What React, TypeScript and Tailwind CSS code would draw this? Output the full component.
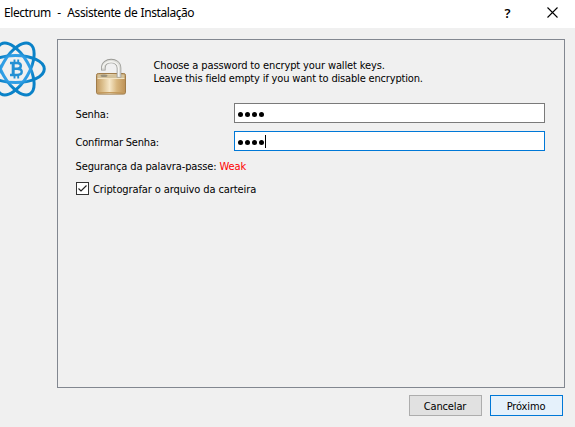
import type { ReactNode } from "react";

function AtomLogo() {
  return (
    <svg width="47" height="60" viewBox="0 0 47 60" className="block">
      <defs>
        <radialGradient id="orbit" gradientUnits="userSpaceOnUse" cx="15.5" cy="30" r="30">
          <stop offset="0" stopColor="#3eaaf0" />
          <stop offset="0.48" stopColor="#2f9de4" />
          <stop offset="0.62" stopColor="#0a82c8" />
          <stop offset="1" stopColor="#0a82c8" />
        </radialGradient>
      </defs>
      <g fill="none" stroke="url(#orbit)" strokeWidth="3">
        <ellipse cx="15.5" cy="30" rx="28.8" ry="13.6" />
        <ellipse cx="15.5" cy="30" rx="28.8" ry="13.6" transform="rotate(60 15.5 30)" />
        <ellipse cx="15.5" cy="30" rx="28.8" ry="13.6" transform="rotate(-60 15.5 30)" />
      </g>
      <g fill="none" stroke="#2490d4">
        <path
          d="M10 24H17.3C22 24 22 29.7 17.3 29.7H13.6M17.3 29.7C23.2 29.7 23.2 36 17.3 36H10"
          strokeWidth="2.4"
        />
        <path d="M13.2 24V36" strokeWidth="3" />
        <path d="M14.5 20.6V23.5M18.2 20.6V23.5M14.5 36.5V39.4M18.2 36.5V39.4" strokeWidth="1.9" />
      </g>
    </svg>
  );
}

function OpenPadlock() {
  return (
    <svg width="32" height="38" viewBox="0 0 32 38" className="block">
      <defs>
        <linearGradient id="brass" x1="0" y1="0" x2="1" y2="0">
          <stop offset="0" stopColor="#c39a60" />
          <stop offset="0.22" stopColor="#dcc08e" />
          <stop offset="0.45" stopColor="#f6e7c8" />
          <stop offset="0.7" stopColor="#d8b67e" />
          <stop offset="1" stopColor="#bd9156" />
        </linearGradient>
      </defs>
      <rect x="1.5" y="15.5" width="29" height="20.6" rx="1.8" fill="url(#brass)" stroke="#a07c4a" />
      <path d="M2.5 16.5H29.5V20H2.5Z" fill="#d3c19a" />
      <path d="M2.5 20.5H29.5" stroke="#f3e4c5" />
      <path d="M2.5 34.5H29.5" stroke="#c59b5d" />
      <ellipse cx="9" cy="17.8" rx="3.5" ry="1.2" fill="#9a917a" />
      <path d="M8.3 12.5V10C8.3 .9 24 .6 24 10V19.5" fill="none" stroke="#9a9a96" strokeWidth="4.6" />
      <path d="M8.3 11.8V10C8.3 1 24 .7 24 10V19" fill="none" stroke="#dededa" strokeWidth="3" />
      <path d="M7.8 10C8.6 1.7 23.3 1.4 23.5 10V18.5" fill="none" stroke="#f5f5f2" strokeWidth="1.2" />
    </svg>
  );
}

function PasswordField({ focused = false }: { focused?: boolean }) {
  return (
    <div
      className={`flex h-5 w-[311px] items-center border bg-white pl-[3px] ${
        focused ? "border-[#0078d7]" : "border-[#7a7a7a]"
      }`}
    >
      <div className="flex gap-[2px] pt-[3px]">
        {[0, 1, 2, 3].map((i) => (
          <span key={i} className="h-[5px] w-[5px] rounded-full bg-black" />
        ))}
      </div>
      {focused && <span className="ml-px h-[13px] w-px bg-black" />}
    </div>
  );
}

function DialogButton({ children, primary = false }: { children: ReactNode; primary?: boolean }) {
  return (
    <button
      className={`flex h-[21px] w-[73px] items-center justify-center border pt-px pr-px ${
        primary ? "border-[#0078d7] bg-[#e5f1fb]" : "border-[#adadad] bg-[#e1e1e1]"
      }`}
    >
      {children}
    </button>
  );
}

export default function App() {
  return (
    <div className="flex h-[427px] w-[575px] flex-col overflow-hidden bg-[#f0f0f0] font-['DejaVu_Sans_Condensed','DejaVu_Sans',sans-serif] text-[11px] leading-[13px] tracking-[-0.15px] whitespace-nowrap text-black">
      <header className="flex h-7 shrink-0 items-center bg-white pl-1 font-['Noto_Sans',sans-serif] text-[12px] leading-4 tracking-[-0.43px]">
        <h1 className="whitespace-pre pb-[2px] [word-spacing:0.6px]">Electrum  -  Assistente de Instalação</h1>
        <span className="ml-auto mr-[37px] pb-[3px] text-[13px] font-semibold">?</span>
        <svg width="11" height="11" viewBox="0 0 11 11" className="mr-[17px] mb-1">
          <path d="M.5.5 10.5 10.5M10.5.5.5 10.5" stroke="#000" strokeWidth="1.1" />
        </svg>
      </header>
      <div className="flex pt-[11px]">
        <aside className="w-[57px] shrink-0">
          <AtomLogo />
        </aside>
        <main className="h-[349px] w-[508px] border border-[#828790] pl-[17px]">
          <div className="flex h-[63px] pt-[18px]">
            <div className="w-[78px] shrink-0 pl-5">
              <OpenPadlock />
            </div>
            <p className="pt-px pl-[0.5px] tracking-[-0.17px]">
              <span className="tracking-[-0.12px]">Choose a password to encrypt your wallet keys.</span>
              <br />
              Leave this field empty if you want to disable encryption.
            </p>
          </div>
          <div className="flex h-5 items-center">
            <label className="w-[159px] pt-[2px] pl-[0.5px]">Senha:</label>
            <PasswordField />
          </div>
          <div className="mt-2 flex h-5 items-center">
            <label className="w-[159px] pt-[2px] pl-[0.5px] tracking-[-0.2px]">Confirmar Senha:</label>
            <PasswordField focused />
          </div>
          <p className="mt-[9px] pl-[0.5px] tracking-[-0.12px]">
            Segurança da palavra-passe: <span className="text-[#ff0000]">Weak</span>
          </p>
          <div className="mt-2 flex h-[14px] items-center gap-1">
            <span className="ml-px flex h-[13px] w-[13px] items-center justify-center border border-[#333] bg-white">
              <svg width="11" height="11" viewBox="0 0 11 11">
                <path d="M1.5 5.5 4 8 9.5 2.5" fill="none" stroke="#222" strokeWidth="1.2" />
              </svg>
            </span>
            <label className="pt-[2px] tracking-[-0.1px]">Criptografar o arquivo da carteira</label>
          </div>
        </main>
      </div>
      <footer className="flex justify-end gap-2 pt-[7px] pr-3">
        <DialogButton>Cancelar</DialogButton>
        <DialogButton primary>Próximo</DialogButton>
      </footer>
    </div>
  );
}
